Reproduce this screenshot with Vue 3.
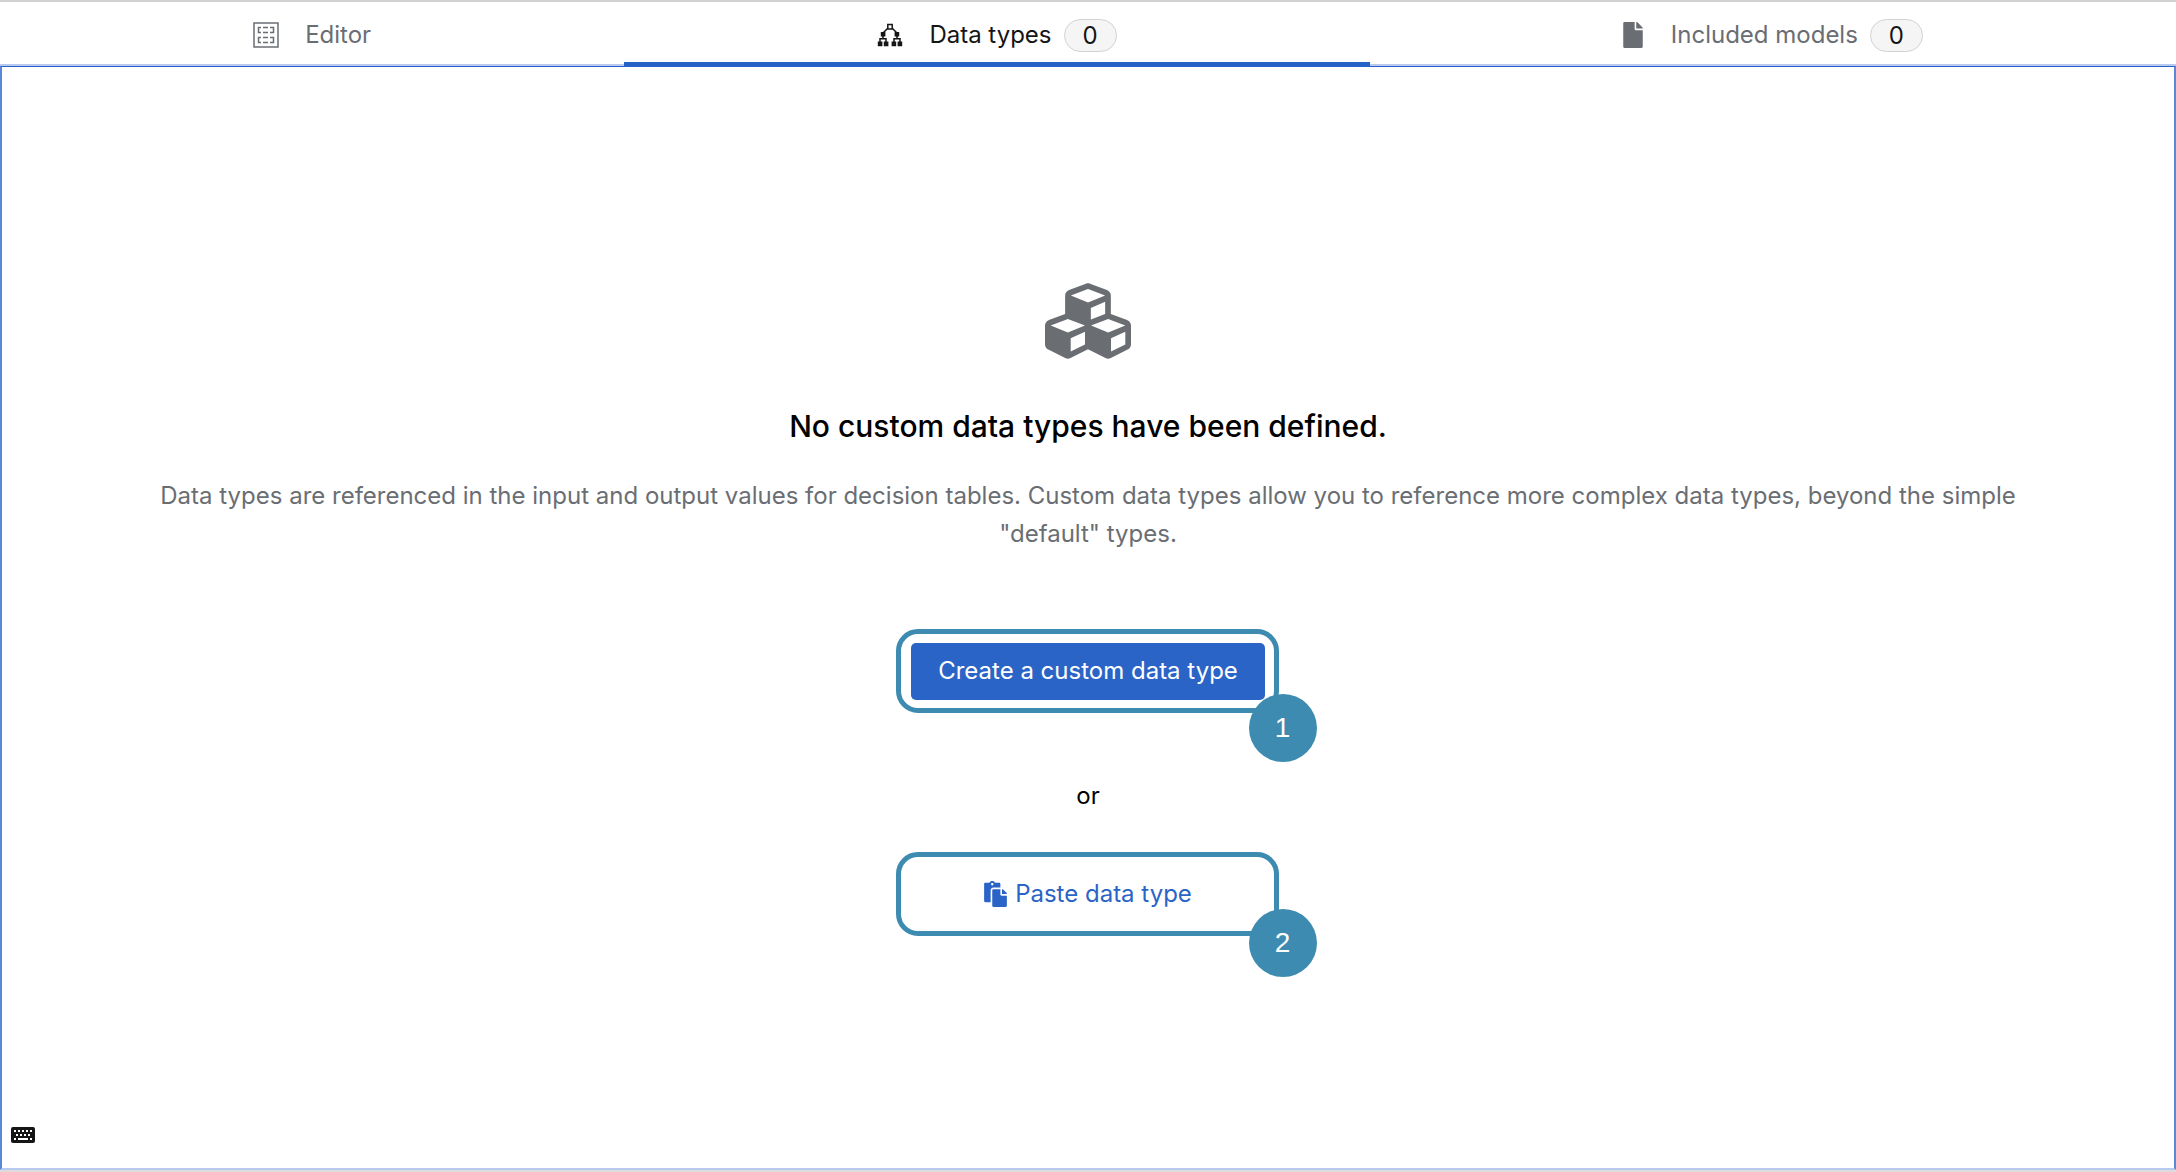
<script setup>
const tabs = [
  { id: 'editor', label: 'Editor', icon: 'grid' },
  { id: 'types', label: 'Data types', icon: 'tree', count: 0, active: true },
  { id: 'models', label: 'Included models', icon: 'file', count: 0 },
]
</script>

<template>
  <div class="page">
    <nav class="tabs" role="tablist">
      <button v-for="t in tabs" :key="t.id" type="button" role="tab" :aria-selected="!!t.active" class="tab" :class="{ active: t.active }">
        <svg v-if="t.icon === 'grid'" class="tab-icon" viewBox="0 0 26 26" fill="none" stroke="currentColor" aria-hidden="true">
          <path stroke-width="1.5" d="M1 1h24v24H1z" />
          <path stroke-width="1.5" d="M8 5.500h-2.500v5H8M10 5.500h5M10 10.500h5M17 5.500h3.500v5H17M8 15.500h-2.500v5H8M10 15.500h5M10 20.500h5M17 15.500h3.500v5H17" />
        </svg>
        <svg v-else-if="t.icon === 'tree'" class="tab-icon" viewBox="0 0 26 26" fill="currentColor" aria-hidden="true">
          <path fill="none" stroke="currentColor" stroke-width="1.500" d="M10.800 2.500h4.400v4.400h-4.400zM10.500 6.500L6 11M15.500 6.500L20 11M6 13v4M20 13v4M3 21v-4.200h6V21M17 21v-4.200h6V21" />
          <path d="M3.800 10h4.600v4.600H3.800zM17.600 10h4.600v4.600h-4.600zM.8 19.600h4.600v4.600H.8zM6.800 19.600h4.600v4.600H6.800zM14.600 19.600h4.600v4.600h-4.600zM20.600 19.600h4.600v4.600h-4.600z" />
        </svg>
        <svg v-else class="tab-icon file" viewBox="0 0 384 512" fill="currentColor" aria-hidden="true">
          <path d="M224 136V0H24C10.700 0 0 10.700 0 24v464c0 13.300 10.700 24 24 24h336c13.300 0 24-10.700 24-24V160H248c-13.200 0-24-10.800-24-24zm160-14.100v6.100H256V0h6.100c6.400 0 12.500 2.500 17 7l97.900 98c4.500 4.500 7 10.600 7 16.900z" />
        </svg>
        <span class="tab-label">{{ t.label }}</span>
        <span v-if="t.count !== undefined" class="badge">{{ t.count }}</span>
      </button>
    </nav>

    <main class="panel">
      <section class="empty">
        <svg class="cubes" viewBox="0 32 512 448" fill="currentColor" aria-hidden="true">
          <path d="M488.600 250.200L392 214V105.500c0-15-9.300-28.400-23.400-33.700l-100-37.500c-8.100-3.100-17.100-3.100-25.300 0l-100 37.500c-14.100 5.300-23.400 18.700-23.400 33.700V214l-96.600 36.200C9.300 255.500 0 268.900 0 283.900V394c0 13.600 7.700 26.100 19.900 32.200l100 50c10.100 5.100 22.100 5.100 32.200 0l103.900-52 103.900 52c10.100 5.100 22.100 5.100 32.200 0l100-50c12.200-6.100 19.900-18.600 19.900-32.200V283.900c0-15-9.300-28.400-23.400-33.700zM358 214.800l-85 31.900v-68.200l85-37v73.300zM154 104.100l102-38.200 102 38.200v.6l-102 41.400-102-41.400v-.6zm84 291.100l-85 42.500v-79.100l85-38.800v75.400zm0-112l-102 41.400-102-41.400v-.6l102-38.200 102 38.200v.6zm240 112l-85 42.500v-79.100l85-38.800v75.400zm0-112l-102 41.400-102-41.400v-.6l102-38.200 102 38.200v.6z" />
        </svg>
        <h1>No custom data types have been defined.</h1>
        <p class="description">Data types are referenced in the input and output values for decision tables. Custom data types allow you to reference more complex data types, beyond the simple "default" types.</p>
        <div class="callout first">
          <button type="button" class="primary">Create a custom data type</button>
          <span class="step">1</span>
        </div>
        <p class="or">or</p>
        <div class="callout second">
          <button type="button" class="link">
            <svg class="paste" viewBox="0 0 448 512" fill="currentColor" aria-hidden="true">
              <path d="M128 184c0-30.879 25.122-56 56-56h136V56c0-13.255-10.745-24-24-24h-80.610C204.306 12.890 183.637 0 160 0s-44.306 12.890-55.390 32H24C10.745 32 0 42.745 0 56v336c0 13.255 10.745 24 24 24h104V184zm32-144c13.255 0 24 10.745 24 24s-10.745 24-24 24-24-10.745-24-24 10.745-24 24-24zm184 248h104v200c0 13.255-10.745 24-24 24H184c-13.255 0-24-10.745-24-24V184c0-13.255 10.745-24 24-24h136v104c0 13.200 10.800 24 24 24zm104-38.059V256h-96v-96h6.059a24 24 0 0 1 16.970 7.029l65.941 65.941a24.002 24.002 0 0 1 7.030 16.971z" />
            </svg>
            <span>Paste data type</span>
          </button>
          <span class="step">2</span>
        </div>
      </section>
      <button type="button" class="keyboard" aria-label="Keyboard shortcuts">
        <svg viewBox="0 0 24 16" aria-hidden="true">
          <rect width="24" height="16" rx="2" fill="#151515" />
          <path fill="#fff" d="M3 3h2v2H3zM7 3h2v2H7zM11 3h2v2h-2zM15 3h2v2h-2zM19 3h2v2h-2zM5 7h2v2H5zM9 7h2v2H9zM13 7h2v2h-2zM17 7h2v2h-2zM3 11h2v2H3zM7 11h10v2H7zM19 11h2v2h-2z" />
        </svg>
      </button>
    </main>
  </div>
</template>

<style>
body {
  background: #fff;
}
</style>

<style scoped>
.page {
  box-sizing: border-box;
  min-height: 100vh;
  display: flex;
  flex-direction: column;
  border-top: 2px solid #d2d2d2;
  border-bottom: 2px solid #dcdcdc;
  font-family: Inter, "Liberation Sans", sans-serif;
  font-size: 24px;
  line-height: 38px;
  color: #000;
}
button {
  font: inherit;
  margin: 0;
  padding: 0;
  border: 0;
  background: none;
  color: inherit;
}
.tabs {
  display: flex;
}
.tab {
  flex: 1 1 auto;
  display: flex;
  justify-content: center;
  align-items: center;
  padding: 14px 0 10px;
  border-bottom: 2px solid #b8caef;
  color: #6a6e73;
}
.tab.active {
  color: #151515;
  box-shadow: inset 0 -2px #2663c6;
  border-bottom-color: #2663c6;
}
.tab-icon {
  width: 26px;
  height: 26px;
  margin-right: 26px;
}
.tab-icon.file {
  width: 20px;
  margin-right: 28px;
}
.badge {
  box-sizing: border-box;
  min-width: 53px;
  height: 33px;
  margin-left: 12px;
  border: 1px solid #d2d2d2;
  border-radius: 17px;
  background: #f5f5f5;
  color: #151515;
  line-height: 31px;
  text-align: center;
}
.panel {
  flex: 1;
  display: flex;
  flex-direction: column;
  justify-content: space-between;
  border: 2px solid #5c86d6;
  border-top: 1px solid #2b60cc;
  border-bottom-color: #b8caef;
}
.empty {
  display: flex;
  flex-direction: column;
  align-items: center;
  padding: 216px 144px 0;
  text-align: center;
}
.cubes {
  width: 86px;
  height: 76px;
  color: #6a6e73;
}
h1 {
  margin: 46px 0 0;
  font-size: 30px;
  font-weight: 500;
  line-height: 42px;
}
.description {
  margin: 30px 0 0;
  color: #6a6e73;
}
.callout {
  position: relative;
  box-sizing: border-box;
  display: flex;
  justify-content: center;
  align-items: center;
  width: 383px;
  height: 84px;
  margin-right: 2px;
  padding-left: 2px;
  border: 5px solid #3d8bb1;
  border-radius: 22px;
}
.first {
  margin-top: 76px;
}
.step {
  position: absolute;
  right: -43px;
  bottom: -54px;
  width: 68px;
  height: 68px;
  border-radius: 50%;
  background: #3d8bb1;
  color: #fff;
  font-family: "Liberation Sans", Arial, sans-serif;
  font-size: 28px;
  line-height: 68px;
}
.second .step {
  bottom: -46px;
}
.primary {
  width: 354px;
  height: 57px;
  border-radius: 5px;
  background: #2a64c7;
  color: #fff;
}
.or {
  margin: 64px 0 37px;
}
.link {
  display: flex;
  align-items: center;
  gap: 8px;
  color: #2a64c7;
}
.paste {
  width: 23px;
  height: 26px;
}
.keyboard {
  align-self: flex-start;
  margin: 0 0 25px 9px;
}
.keyboard svg {
  display: block;
  width: 24px;
  height: 16px;
}
</style>
